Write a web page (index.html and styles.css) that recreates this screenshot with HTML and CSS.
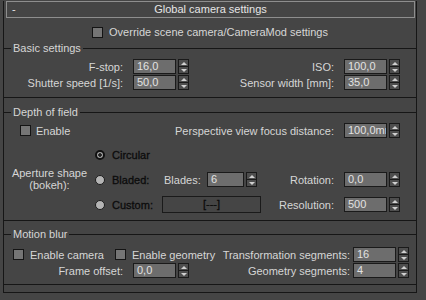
FILE: index.html
```html
<!DOCTYPE html>
<html>
<head>
<meta charset="utf-8">
<link rel="stylesheet" href="styles.css">
</head>
<body>
<div class="panel">
  <div class="header"><span class="minus">-</span><span class="title">Global camera settings</span><span></span></div>

  <div class="override"><span class="chk"></span><span>Override scene camera/CameraMod settings</span></div>

  <div class="group basic">
    <div class="legend">Basic settings</div>
    <div class="row">
      <span class="lbl w-left">F-stop:</span>
      <div class="spin ml10"><div class="field">16,0</div><div class="arrows"><span class="up"></span><span class="dn"></span></div></div>
      <span class="lbl w-right">ISO:</span>
      <div class="spin ml10 wide"><div class="field">100,0</div><div class="arrows"><span class="up"></span><span class="dn"></span></div></div>
    </div>
    <div class="row">
      <span class="lbl w-left">Shutter speed [1/s]:</span>
      <div class="spin ml10"><div class="field">50,0</div><div class="arrows"><span class="up"></span><span class="dn"></span></div></div>
      <span class="lbl w-right">Sensor width [mm]:</span>
      <div class="spin ml10 wide"><div class="field">35,0</div><div class="arrows"><span class="up"></span><span class="dn"></span></div></div>
    </div>
  </div>

  <div class="group dof">
    <div class="legend">Depth of field</div>
    <div class="row pr16">
      <div class="check-item ml16"><span class="chk"></span><span>Enable</span></div>
      <span class="lbl grow">Perspective view focus distance:</span>
      <div class="spin ml10 wide"><div class="field">100,0mm</div><div class="arrows"><span class="up"></span><span class="dn"></span></div></div>
    </div>
    <div class="aperture">
      <div class="ap-label">Aperture shape<br>(bokeh):</div>
      <div class="opt r1"><span class="radio on"></span><span class="dark">Circular</span></div>
      <div class="opt r2"><span class="radio off"></span><span class="dark">Bladed:</span></div>
      <div class="blades r2"><span class="blades-lbl">Blades:</span><div class="spin"><div class="field bf">6</div><div class="arrows"><span class="up"></span><span class="dn"></span></div></div></div>
      <div class="right r2"><span class="lbl w-ap">Rotation:</span><div class="spin ml10 wide"><div class="field">0,0</div><div class="arrows"><span class="up"></span><span class="dn"></span></div></div></div>
      <div class="opt r3"><span class="radio off"></span><span class="dark">Custom:</span></div>
      <div class="custom r3"><div class="btn">[---]</div></div>
      <div class="right r3"><span class="lbl w-ap">Resolution:</span><div class="spin ml10 wide"><div class="field">500</div><div class="arrows"><span class="up"></span><span class="dn"></span></div></div></div>
    </div>
  </div>

  <div class="group motion">
    <div class="legend">Motion blur</div>
    <div class="row pr7">
      <div class="check-item ml9"><span class="chk"></span><span>Enable camera</span></div>
      <div class="check-item ml11"><span class="chk"></span><span>Enable geometry</span></div>
      <span class="lbl grow">Transformation segments:</span>
      <div class="spin ml3"><div class="field">16</div><div class="arrows"><span class="up"></span><span class="dn"></span></div></div>
    </div>
    <div class="row pr7">
      <span class="lbl w-left">Frame offset:</span>
      <div class="spin ml10"><div class="field">0,0</div><div class="arrows"><span class="up"></span><span class="dn"></span></div></div>
      <span class="lbl grow">Geometry segments:</span>
      <div class="spin ml3"><div class="field">4</div><div class="arrows"><span class="up"></span><span class="dn"></span></div></div>
    </div>
  </div>
</div>
</body>
</html>
```
FILE: styles.css
```css
html, body {
  margin: 0;
  padding: 0;
  background: #454545;
}
body {
  width: 426px;
  height: 300px;
  overflow: hidden;
  font-family: "Liberation Sans", Arial, sans-serif;
  font-size: 11px;
  color: #d6d6d6;
}
.panel {
  margin: 9px 0 0 3px;
  width: 412px;
  border: 1px solid #161616;
  border-top: 0;
  padding-bottom: 7px;
}
.header {
  margin: -8px 0 0 2px;
  width: 409px;
  height: 17px;
  box-sizing: border-box;
  border: 1px solid #8e8e8e;
  display: grid;
  grid-template-columns: 20px 1fr 20px;
  align-items: center;
  line-height: 15px;
  color: #e6e6e6;
}
.minus {
  padding-left: 5px;
}
.title {
  text-align: center;
}
.override {
  height: 22px;
  margin-top: 3px;
  display: flex;
  align-items: center;
  justify-content: center;
  gap: 6px;
}
.chk {
  display: inline-block;
  width: 11px;
  height: 11px;
  box-sizing: border-box;
  border: 1px solid #141414;
  background: #757575;
  flex: none;
}
.group {
  border-top: 1px solid #161616;
  border-bottom: 1px solid #161616;
}
.legend {
  width: fit-content;
  margin: -8px 0 0 7px;
  padding: 0 2px;
  height: 14px;
  line-height: 14px;
  background: #454545;
}
.basic {
  margin-top: 5px;
  padding-bottom: 7px;
}
.row {
  display: flex;
  align-items: center;
  height: 15px;
  margin-top: 1px;
}
.basic .legend + .row {
  margin-top: 4px;
}
.lbl {
  text-align: right;
  white-space: nowrap;
  flex: none;
}
.w-left { width: 119px; }
.w-right { width: 145px; }
.w-ap { width: 72px; }
.grow { flex: 1; }
.ml3 { margin-left: 3px; }
.ml9 { margin-left: 9px; }
.ml10 { margin-left: 10px; }
.ml11 { margin-left: 11px; }
.ml16 { margin-left: 16px; }
.pr16 { padding-right: 16px; }
.pr7 { padding-right: 7px; }

.spin {
  display: flex;
  align-items: center;
  gap: 2px;
  flex: none;
}
.field {
  width: 43px;
  height: 15px;
  box-sizing: border-box;
  border: 1px solid #1a1a1a;
  background: #6d6d6d;
  color: #e2e2e2;
  line-height: 13px;
  padding-left: 3px;
  overflow: hidden;
  white-space: nowrap;
}
.arrows {
  width: 11px;
  height: 15px;
  box-sizing: border-box;
  border: 1px solid #1a1a1a;
  background: #1a1a1a;
  display: flex;
  flex-direction: column;
  gap: 1px;
}
.arrows span {
  flex: 1;
  background: #4e4e4e;
  display: flex;
  align-items: center;
  justify-content: center;
}
.arrows .up::before {
  content: "";
  border-left: 3px solid transparent;
  border-right: 3px solid transparent;
  border-bottom: 3px solid #d0d0d0;
}
.arrows .dn::before {
  content: "";
  border-left: 3px solid transparent;
  border-right: 3px solid transparent;
  border-top: 3px solid #d0d0d0;
}

.dof {
  margin-top: 14px;
  padding-bottom: 3px;
}
.dof .legend + .row {
  margin-top: 4px;
}
.check-item {
  display: flex;
  align-items: center;
  gap: 5px;
  white-space: nowrap;
}
.motion .check-item {
  gap: 6px;
}
.aperture {
  margin-top: 4px;
  display: grid;
  grid-template-columns: 91px 65px 102px 1fr;
  grid-template-rows: 25px 25px 25px;
  align-items: center;
}
.ap-label {
  grid-column: 1;
  grid-row: 1 / span 3;
  text-align: center;
  line-height: 12px;
  margin-top: -1px;
}
.r1 { grid-row: 1; }
.r2 { grid-row: 2; }
.r3 { grid-row: 3; }
.opt {
  grid-column: 2;
  display: flex;
  align-items: center;
  gap: 7px;
}
.dark {
  color: #0c0c0c;
  -webkit-text-stroke: 0.3px #0c0c0c;
}
.radio {
  width: 10px;
  height: 10px;
  border-radius: 50%;
  box-sizing: border-box;
  flex: none;
}
.radio.on {
  border: 2px solid #111;
  background: radial-gradient(circle, #202020 0 1.5px, #a0a0a0 2px);
}
.radio.off {
  border: 1px solid #1c1c1c;
  background: #b4b4b4;
}
.blades {
  grid-column: 3;
  display: flex;
  align-items: center;
  padding-left: 4px;
}
.blades-lbl {
  width: 43px;
}
.field.bf {
  width: 37px;
}
.custom {
  grid-column: 3;
  padding-left: 2px;
}
.btn {
  width: 99px;
  height: 17px;
  box-sizing: border-box;
  border: 1px solid #1a1a1a;
  text-align: center;
  line-height: 15px;
  color: #0c0c0c;
  -webkit-text-stroke: 0.3px #0c0c0c;
}
.right {
  grid-column: 4;
  display: flex;
  align-items: center;
}
.motion {
  margin-top: 13px;
  padding-bottom: 6px;
}
.motion .legend + .row {
  margin-top: 6px;
}
```
